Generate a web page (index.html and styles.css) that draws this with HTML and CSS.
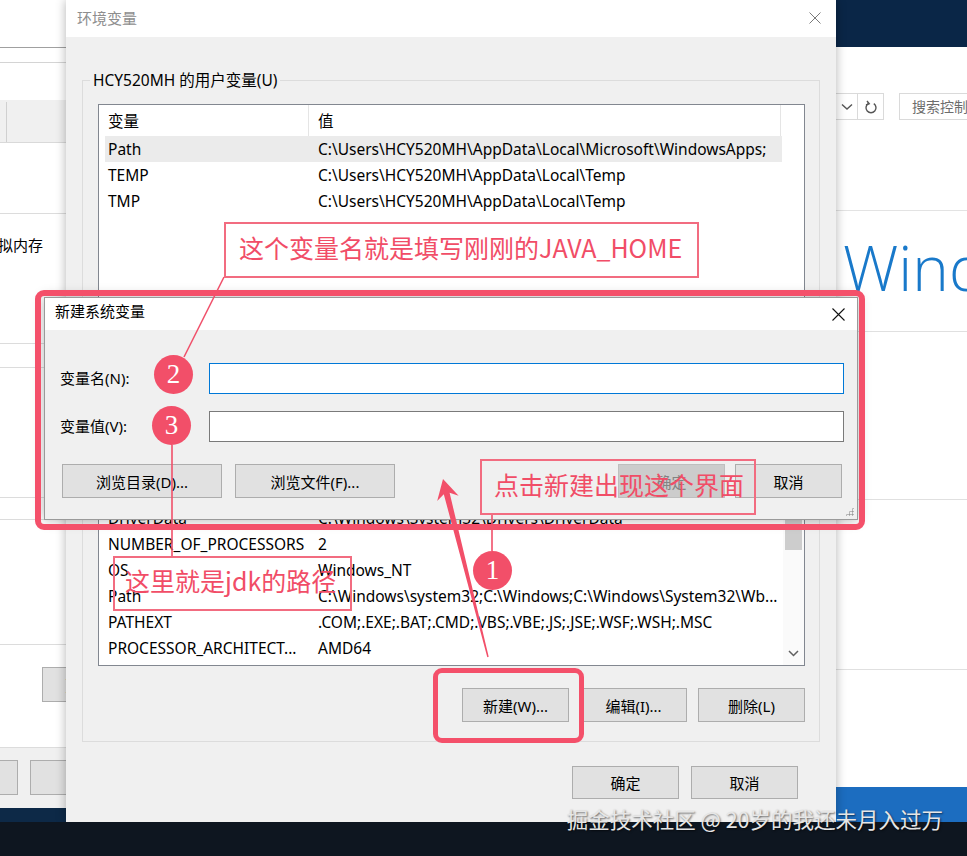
FILE: index.html
```html
<!DOCTYPE html>
<html>
<head>
  <meta charset="utf-8">
  <title>环境变量</title>
  <link rel="stylesheet" href="styles.css">
</head>
<body>
  <div class="desktop">

    <!-- 后面的系统属性窗口，只露出右边一条 -->
    <div class="win sysprops">
      <div class="sp-top"></div>
      <div class="sp-menu"></div>
      <div class="sp-gap"></div>
      <div class="sp-tabs"><span class="sp-tab"></span></div>
      <div class="sp-sec sp-h70"></div>
      <div class="sp-sec sp-h130"><span class="sp-label">虚拟内存</span></div>
      <div class="sp-sec sp-h24"></div>
      <div class="sp-sec sp-h130"></div>
      <div class="sp-sec sp-h22"></div>
      <div class="sp-sec sp-h125"></div>
      <div class="sp-sec sp-btnrow"><button class="btn sp-btn">更改(C)...</button></div>
      <div class="sp-foot">
        <button class="btn sp-btn">确定</button>
        <button class="btn sp-btn">取消</button>
      </div>
    </div>

    <!-- 控制面板 -->
    <div class="win cpanel">
      <div class="cp-bar">
        <span class="cp-drop">
          <svg width="12" height="8" viewBox="0 0 12 8"><path d="M1 1.5 L6 6 L11 1.5" fill="none" stroke="#555" stroke-width="1.4"/></svg>
        </span>
        <span class="cp-refresh">
          <svg width="14" height="16" viewBox="0 0 14 16"><path d="M4.2 4.6 A5 5 0 1 0 9.8 4.6" fill="none" stroke="#555" stroke-width="1.4"/><path d="M3 2 L5.2 4.8 L2 6" fill="none" stroke="#555" stroke-width="1.4"/></svg>
        </span>
        <span class="cp-search">搜索控制面板</span>
      </div>
      <div class="cp-sec cp-hero"><span class="cp-brand">Windows 10</span></div>
      <div class="cp-sec cp-h168"></div>
      <div class="cp-sec cp-h170"></div>
    </div>

    <!-- 环境变量 -->
    <div class="win envwin">
      <div class="titlebar">
        <span>环境变量</span>
        <svg width="12" height="12" viewBox="0 0 12 12"><path d="M0.5 0.5 L11.5 11.5 M11.5 0.5 L0.5 11.5" stroke="#7a7a7a" stroke-width="1"/></svg>
      </div>
      <div class="env-body">
        <fieldset class="group">
          <legend>HCY520MH 的用户变量(U)</legend>
          <div class="listview lv-user">
            <div class="lv-head"><span class="c1">变量</span><span class="c2">值</span></div>
            <div class="lv-rows">
              <div class="row sel"><span class="n">Path</span><span class="v">C:\Users\HCY520MH\AppData\Local\Microsoft\WindowsApps;</span></div>
              <div class="row"><span class="n">TEMP</span><span class="v">C:\Users\HCY520MH\AppData\Local\Temp</span></div>
              <div class="row"><span class="n">TMP</span><span class="v">C:\Users\HCY520MH\AppData\Local\Temp</span></div>
            </div>
          </div>
          <div class="btn-row">
            <button class="btn">新建(N)...</button>
            <button class="btn btn-mid">编辑(E)...</button>
            <button class="btn">删除(D)</button>
          </div>
        </fieldset>

        <fieldset class="group group-sys">
          <legend>系统变量(S)</legend>
          <div class="listview lv-sys">
            <div class="lv-main">
              <div class="lv-head"><span class="c1">变量</span><span class="c2">值</span></div>
              <div class="lv-rows">
                <div class="row"><span class="n">ComSpec</span><span class="v">C:\Windows\system32\cmd.exe</span></div>
                <div class="row"><span class="n">DriverData</span><span class="v">C:\Windows\System32\Drivers\DriverData</span></div>
                <div class="row"><span class="n">NUMBER_OF_PROCESSORS</span><span class="v">2</span></div>
                <div class="row"><span class="n">OS</span><span class="v">Windows_NT</span></div>
                <div class="row"><span class="n">Path</span><span class="v">C:\Windows\system32;C:\Windows;C:\Windows\System32\Wb...</span></div>
                <div class="row"><span class="n">PATHEXT</span><span class="v">.COM;.EXE;.BAT;.CMD;.VBS;.VBE;.JS;.JSE;.WSF;.WSH;.MSC</span></div>
                <div class="row"><span class="n">PROCESSOR_ARCHITECT...</span><span class="v">AMD64</span></div>
              </div>
            </div>
            <div class="scrollbar">
              <span class="thumb"></span>
              <svg class="sb-down" width="11" height="7" viewBox="0 0 11 7"><path d="M1 1 L5.5 5.5 L10 1" fill="none" stroke="#606060" stroke-width="1.5"/></svg>
            </div>
          </div>
          <div class="btn-row">
            <button class="btn">新建(W)...</button>
            <button class="btn btn-mid">编辑(I)...</button>
            <button class="btn">删除(L)</button>
          </div>
        </fieldset>

        <div class="btn-row dlg-foot">
          <button class="btn">确定</button>
          <button class="btn btn-mid">取消</button>
        </div>
      </div>
    </div>

    <!-- 新建系统变量 -->
    <div class="win dlg">
      <div class="dlg-title">
        <span>新建系统变量</span>
        <svg width="13" height="13" viewBox="0 0 13 13"><path d="M0.5 0.5 L12.5 12.5 M12.5 0.5 L0.5 12.5" stroke="#111" stroke-width="1.1"/></svg>
      </div>
      <div class="dlg-body">
        <div class="field"><label>变量名(N):</label><input class="focus" type="text"></div>
        <div class="field"><label>变量值(V):</label><input type="text"></div>
        <div class="dlg-btns">
          <button class="btn btn-wide">浏览目录(D)...</button>
          <button class="btn btn-wide btn-gap">浏览文件(F)...</button>
          <span class="spacer"></span>
          <button class="btn" disabled>确定</button>
          <button class="btn btn-gap2">取消</button>
        </div>
      </div>
      <span class="grip"></span>
    </div>

    <!-- 标注 -->
    <div class="notes">
      <svg class="marks" width="967" height="856" viewBox="0 0 967 856">
        <g stroke="#f0506a" stroke-width="1.6">
          <line x1="224" y1="277" x2="184" y2="357"/>
          <line x1="172" y1="445" x2="172" y2="556"/>
          <line x1="492" y1="514" x2="492" y2="551"/>
        </g>
        <polygon fill="#f24f69" points="443,479 458.6,495.7 449.6,492.8 488.7,656.8 487.3,657.2 443.8,494.2 437.2,501.1"/>
      </svg>
      <div class="frame frame-dlg"></div>
      <div class="frame frame-new"></div>
      <div class="note note-name">这个变量名就是填写刚刚的JAVA_HOME</div>
      <div class="note note-click">点击新建出现这个界面</div>
      <div class="note note-path">这里就是jdk的路径</div>
      <div class="badge b1">1</div>
      <div class="badge b2">2</div>
      <div class="badge b3">3</div>
    </div>
  </div>

  <div class="taskbar"></div>
  <div class="watermark">掘金技术社区 @ 20岁的我还未月入过万</div>
</body>
</html>
```

FILE: styles.css
```css
* {
  box-sizing: border-box;
}
body {
  margin: 0;
  width: 967px;
  height: 856px;
  overflow: hidden;
  position: relative;
  font-family: "Noto Sans", "Noto Sans CJK SC", sans-serif;
  font-size: 15.5px;
  color: #000;
  background: #0f1720;
}
.desktop {
  position: relative;
  width: 967px;
  height: 822px;
  overflow: hidden;
  background:
    linear-gradient(90deg, #0d2947 0 80px, transparent 80px),
    linear-gradient(#0a2647 0 786px, #1c6dc0 786px);
}
.taskbar {
  height: 34px;
  background: #0e1620;
}
.win {
  position: absolute;
}
.btn {
  flex-shrink: 0;
  height: 34px;
  width: 107px;
  padding: 0;
  background: #e1e1e1;
  border: 1px solid #adadad;
  font-family: inherit;
  font-size: 15px;
  color: #000;
  display: flex;
  align-items: center;
  justify-content: center;
}
.btn:disabled {
  background: #cccccc;
  border-color: #bfbfbf;
  color: #838383;
}

/* system properties, behind */
.sysprops {
  left: -300px;
  top: 0;
  width: 366px;
  height: 807px;
  background: #fff;
}
.sp-top {
  height: 48px;
  border-bottom: 1px solid #a0a0a0;
}
.sp-menu {
  height: 15px;
  border-bottom: 1px solid #d4d4d4;
}
.sp-gap {
  height: 37px;
}
.sp-tabs {
  height: 43px;
  background: #f0f0f0;
  border-bottom: 1px solid #d9d9d9;
  display: flex;
  justify-content: flex-end;
  padding-right: 59px;
}
.sp-tab {
  width: 1px;
  background: #d0d0d0;
  margin-top: 2px;
}
.sp-sec {
  border-bottom: 1px solid #dcdcdc;
}
.sp-h70 { height: 71px; }
.sp-h130 { height: 130px; }
.sp-h24 { height: 24px; }
.sp-h22 { height: 22px; }
.sp-h125 { height: 125px; }
.sp-label {
  display: block;
  padding: 20px 0 0 283px;
  line-height: 22px;
  font-size: 15px;
}
.sp-btnrow {
  height: 103px;
  padding: 22px 0 0 342px;
  background: #fff;
}
.sp-btn {
  height: 35px;
}
.sp-foot {
  height: 60px;
  background: #f0f0f0;
  display: flex;
  gap: 12px;
  padding: 12px 0 0 211px;
}

/* control panel, right */
.cpanel {
  left: 800px;
  top: 47px;
  width: 200px;
  height: 740px;
  background: #fff;
}
.cp-bar {
  height: 164px;
  border-bottom: 1px solid #e3e3e3;
  display: flex;
  align-items: flex-start;
  padding: 46px 0 0 36px;
}
.cp-bar > span {
  flex-shrink: 0;
}
.cp-drop, .cp-refresh {
  height: 27px;
  display: flex;
  align-items: center;
  justify-content: center;
  border: 1px solid #dadada;
}
.cp-drop {
  width: 22px;
  border-left: none;
}
.cp-refresh {
  width: 26px;
  border-left: none;
}
.cp-search {
  margin-left: 15px;
  height: 27px;
  width: 160px;
  border: 1px solid #dadada;
  padding-left: 12px;
  font-size: 14px;
  color: #6d6d6d;
  line-height: 25px;
  white-space: nowrap;
  overflow: hidden;
}
.cp-sec {
  border-bottom: 1px solid #e0e0e0;
}
.cp-hero {
  height: 121px;
  padding: 25px 0 0 43px;
  white-space: nowrap;
  overflow: hidden;
}
.cp-brand {
  font-family: "Open Sans", "Noto Sans", sans-serif;
  font-weight: 300;
  font-size: 62px;
  line-height: 62px;
  color: #1979ca;
}
.cp-h168 { height: 168px; }
.cp-h170 { height: 170px; }

/* environment variables window */
.envwin {
  left: 66px;
  top: 0;
  width: 770px;
  height: 822px;
  background: #f0f0f0;
  box-shadow: 0 0 10px rgba(0, 0, 0, 0.3);
  z-index: 2;
}
.titlebar {
  height: 37px;
  background: #fff;
  display: flex;
  align-items: center;
  justify-content: space-between;
  padding: 0 15px 2px 11px;
  color: #8e8e8e;
  font-size: 15px;
}
.env-body {
  padding: 33px 16px 0 16px;
}
.group {
  margin: 0;
  width: 738px;
  padding: 0 14px 13px 15px;
  border: 1px solid #dcdcdc;
}
.group legend {
  margin-left: -8px;
  padding: 0 3px;
  line-height: 20px;
}
.group-sys {
  margin-top: 39px;
  padding-bottom: 19px;
}
.listview {
  margin-top: 14px;
  background: #fff;
  border: 1px solid #828790;
  overflow: hidden;
}
.lv-user {
  height: 210px;
}
.lv-sys {
  height: 219px;
  display: flex;
}
.lv-main {
  flex: 1;
  overflow: hidden;
}
.lv-head {
  display: flex;
  height: 31px;
}
.lv-head span {
  display: flex;
  align-items: center;
  padding-left: 9px;
  border-right: 1px solid #e5e5e5;
}
.lv-head .c1 { width: 210px; }
.lv-head .c2 { width: 472px; }
.lv-rows {
  padding-left: 6px;
}
.row {
  display: flex;
  align-items: center;
  height: 26px;
  width: 677px;
  white-space: nowrap;
}
.row.sel {
  background: #ebebeb;
}
.row .n {
  width: 204px;
  padding-left: 3px;
  overflow: hidden;
}
.row .v {
  flex: 1;
  padding-left: 9px;
  overflow: hidden;
}
.scrollbar {
  width: 21px;
  background: #fafafa;
  display: flex;
  flex-direction: column;
  align-items: center;
}
.thumb {
  width: 17px;
  height: 80px;
  margin-top: 22px;
  background: #cdcdcd;
}
.sb-down {
  margin-top: auto;
  margin-bottom: 8px;
}
.btn-row {
  display: flex;
  justify-content: flex-end;
  margin-top: 12px;
  gap: 11px;
}
.group-sys .btn-row {
  margin-top: 22px;
}
.dlg-foot {
  margin-top: 24px;
  margin-right: 22px;
  gap: 12px;
}
.dlg-foot .btn {
  height: 33px;
}

/* new system variable dialog */
.dlg {
  left: 44px;
  top: 297px;
  width: 814px;
  height: 223px;
  background: #f0f0f0;
  border: 1px solid #9a9a9a;
  box-shadow: 0 0 12px rgba(0, 0, 0, 0.3);
  z-index: 3;
  font-size: 15px;
}
.dlg-title {
  height: 32px;
  background: #fff;
  display: flex;
  align-items: center;
  justify-content: space-between;
  padding: 0 12px 7px 10px;
}
.dlg-title svg {
  margin-top: 7px;
}
.dlg-body {
  padding: 33px 13px 0 15px;
}
.field {
  display: flex;
  align-items: center;
}
.field + .field {
  margin-top: 17px;
}
.field label {
  width: 149px;
  padding-bottom: 2px;
}
.field input {
  flex: 1;
  height: 31px;
  border: 1px solid #7a7a7a;
  background: #fff;
  outline: none;
}
.field input.focus {
  border-color: #0078d7;
}
.dlg-btns {
  display: flex;
  margin-top: 22px;
  padding: 0 2px;
}
.btn-wide { width: 160px; }
.btn-gap { margin-left: 13px; }
.btn-gap2 { margin-left: 10px; }
.spacer { flex: 1; }
.grip {
  position: absolute;
  right: 3px;
  bottom: 3px;
  width: 9px;
  height: 9px;
  background:
    radial-gradient(circle, #9a9a9a 0.9px, transparent 1.2px) 0 0 / 3px 3px;
  clip-path: polygon(100% 0, 100% 100%, 0 100%);
}

/* annotations */
.notes {
  position: absolute;
  left: 0;
  top: 0;
  width: 967px;
  height: 856px;
  z-index: 5;
  pointer-events: none;
}
.marks {
  position: absolute;
  left: 0;
  top: 0;
}
.frame {
  position: absolute;
  border: 6px solid #f4506a;
  border-radius: 9px;
}
.frame-dlg {
  left: 35px;
  top: 290px;
  width: 830px;
  height: 240px;
}
.frame-new {
  left: 433px;
  top: 668px;
  width: 151px;
  height: 75px;
  border-width: 5px;
}
.note {
  position: absolute;
  border: 2px solid #f26c80;
  color: #f14d67;
  font-family: "Noto Sans CJK SC", sans-serif;
  font-size: 25px;
  line-height: 30px;
  padding: 0 0 7px 12px;
  display: flex;
  align-items: center;
  white-space: nowrap;
}
.note-name {
  left: 224px;
  top: 222px;
  width: 475px;
  height: 56px;
  padding-left: 13px;
}
.note-click {
  left: 480px;
  top: 459px;
  width: 276px;
  height: 56px;
}
.note-path {
  left: 113px;
  top: 556px;
  width: 239px;
  height: 55px;
  padding-left: 10px;
}
.badge {
  position: absolute;
  width: 39px;
  height: 39px;
  border-radius: 50%;
  background: #f24f69;
  color: #fff;
  font-family: "Liberation Serif", serif;
  font-size: 27px;
  display: flex;
  align-items: center;
  justify-content: center;
}
.b1 { left: 473px; top: 551px; }
.b2 { left: 154px; top: 355px; }
.b3 { left: 152px; top: 406px; }

.watermark {
  position: absolute;
  right: 24px;
  top: 804px;
  z-index: 6;
  font-family: "Noto Sans CJK SC", sans-serif;
  font-size: 21.5px;
  line-height: 30px;
  color: #e6e6e6;
  text-shadow: 1px 1px 2px rgba(0, 0, 0, 0.6);
}
```
